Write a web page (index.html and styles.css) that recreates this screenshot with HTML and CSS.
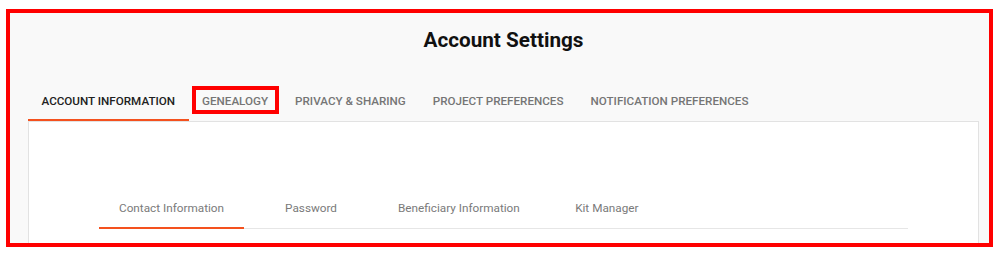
FILE: index.html
```html
<!DOCTYPE html>
<html lang="en">
<head>
<meta charset="utf-8">
<title>Account Settings</title>
<link rel="stylesheet" href="styles.css">
</head>
<body>
<div class="frame">
  <div class="container">
    <h1 class="title">Account Settings</h1>
    <nav class="tabs">
      <a class="tab active">Account Information</a>
      <a class="tab highlighted">Genealogy<span class="mark"></span></a>
      <a class="tab">Privacy &amp; Sharing</a>
      <a class="tab">Project Preferences</a>
      <a class="tab">Notification Preferences</a>
    </nav>
    <section class="card">
      <nav class="subtabs">
        <a class="subtab active">Contact Information</a>
        <a class="subtab">Password</a>
        <a class="subtab">Beneficiary Information</a>
        <a class="subtab">Kit Manager</a>
      </nav>
    </section>
  </div>
</div>
</body>
</html>
```
FILE: styles.css
```css
* { box-sizing: border-box; }
html, body { margin: 0; padding: 0; background: #ffffff; }
body { font-family: Roboto, "Liberation Sans", Arial, sans-serif; }

.frame {
  margin: 9px 0 0 6px;
  width: 987px;
  height: 238px;
  border: 4px solid #ff0000;
  background: #f9f9f9;
  overflow: hidden;
}

.container {
  margin: 0 10px 0 18px;
  width: 951px;
}

.title {
  margin: 15px 0 0;
  font-size: 20.7px;
  line-height: 25px;
  font-weight: 700;
  color: #111111;
  text-align: center;
}

.tabs {
  display: flex;
  margin-top: 29px;
}

.tab {
  position: relative;
  padding: 12px 13.5px 11px;
  font-size: 11.65px;
  line-height: 14px;
  font-weight: 500;
  text-transform: uppercase;
  color: #757575;
  border-bottom: 2px solid transparent;
  white-space: nowrap;
}

.tab.active {
  color: #212121;
  border-bottom-color: #f4511e;
}

.mark {
  position: absolute;
  top: 4px;
  bottom: 5px;
  left: 3px;
  right: 3px;
  border: 4px solid #ff0000;
}

.card {
  background: #ffffff;
  border: 1px solid #e2e2e2;
  padding: 63px 70px 60px;
}

.subtabs {
  display: flex;
  border-bottom: 1px solid #e6e6e6;
}

.subtab {
  min-width: 134px;
  padding: 16px 20px 11px;
  margin-bottom: -1px;
  font-size: 11.75px;
  line-height: 15px;
  color: #7a7a7a;
  text-align: center;
  border-bottom: 2px solid transparent;
  white-space: nowrap;
}

.subtab.active {
  border-bottom-color: #f4511e;
}
```
